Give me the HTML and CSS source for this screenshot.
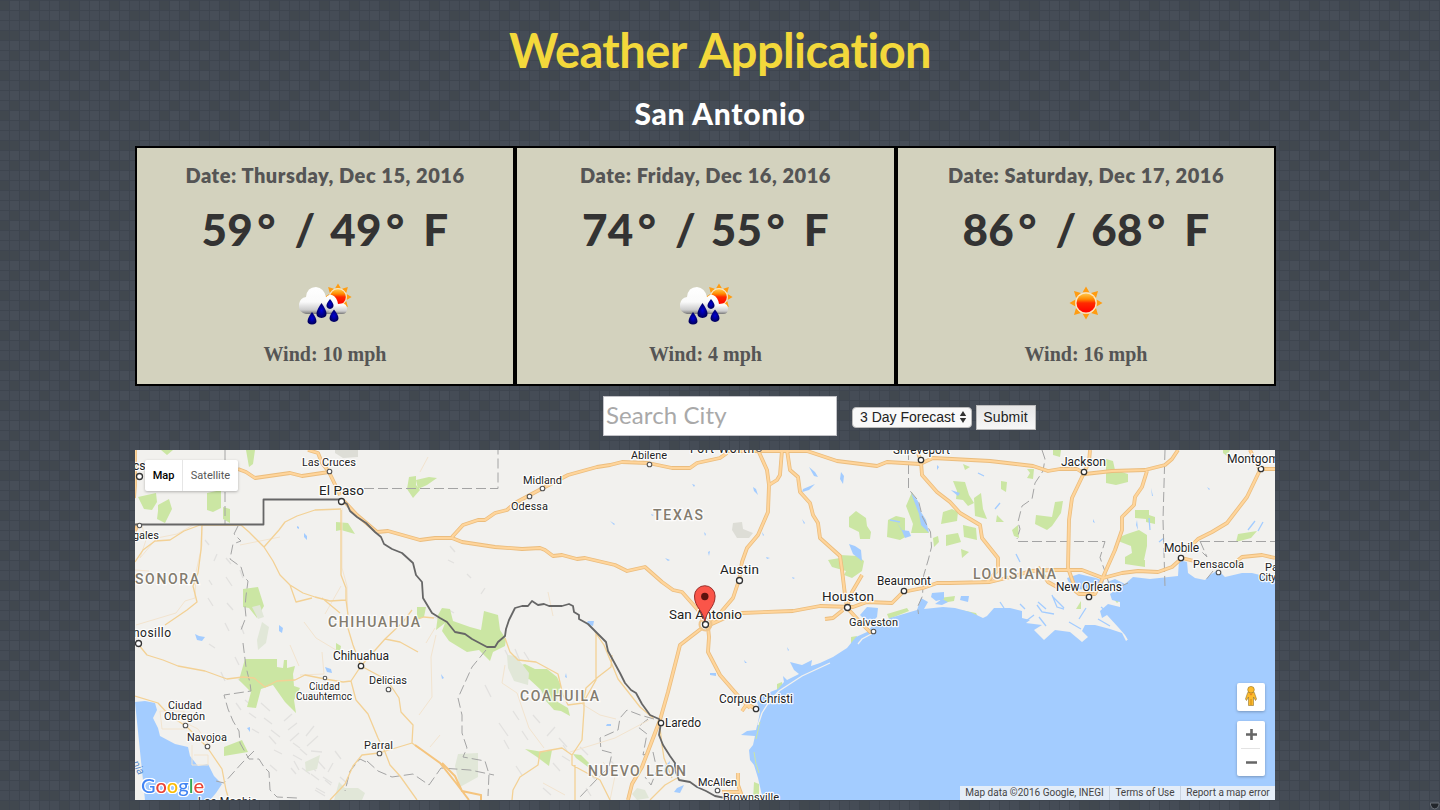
FILE: index.html
```html
<!DOCTYPE html>
<html lang="en">
<head>
<meta charset="utf-8">
<title>Weather Application</title>
<link rel="stylesheet" href="styles.css">
</head>
<body>
<svg class="texture" width="1440" height="810" aria-hidden="true">
  <defs>
    <pattern id="tiles" width="160" height="110" patternUnits="userSpaceOnUse">
      <rect width="160" height="110" fill="#454c56"/>
      <path fill="#41484f" d="M0 0h10v10H0zM30 0h10v10H30zM60 0h20v10H60zM110 0h10v10h-10zM20 10h10v10H20zM70 10h10v10H70zM130 10h20v10h-20zM40 20h20v10H40zM100 20h10v10h-10zM0 30h20v10H0zM60 30h10v10H60zM120 30h20v10h-20zM30 40h20v10H30zM80 40h20v10H80zM150 40h10v10h-10zM10 50h10v10H10zM60 50h10v10H60zM110 50h20v10h-20zM40 60h10v10H40zM90 60h10v10H90zM140 60h10v10h-10zM0 70h10v10H0zM60 70h20v10H60zM120 70h10v10h-10zM20 80h30v10H20zM100 80h10v10h-10zM150 80h10v10h-10zM70 90h20v10H70zM130 90h10v10h-10zM10 100h10v10H10zM50 100h10v10H50zM110 100h20v10h-20z"/>
      <path fill="#474e58" d="M10 0h10v10H10zM90 0h10v10H90zM50 10h10v10H50zM110 10h10v10h-10zM70 20h20v10H70zM140 20h10v10h-10zM30 30h10v10H30zM100 30h10v10h-10zM10 40h10v10H10zM120 40h10v10h-10zM40 50h10v10H40zM90 50h10v10H90zM20 60h10v10H20zM120 60h10v10h-10zM40 70h10v10H40zM100 70h10v10h-10zM70 80h10v10H70zM130 80h10v10h-10zM10 90h10v10H10zM110 90h10v10h-10zM80 100h10v10H80zM140 100h10v10h-10z"/>
    </pattern>
    <pattern id="lines" width="10" height="10" patternUnits="userSpaceOnUse">
      <path d="M0 .5h10M9.500 0v10" stroke="#3e454f" fill="none"/>
    </pattern>
  </defs>
  <rect width="1440" height="810" fill="url(#tiles)"/>
  <rect width="1440" height="810" fill="url(#lines)"/>
  <path d="M1430.500 803h8.500v2q-1 4-4.250 4t-4.250-4z" fill="#22262b" stroke="#6a7078"/>
</svg>

<svg width="0" height="0" class="symbols" aria-hidden="true">
  <defs>
    <linearGradient id="sunfill" x1="0" y1="0" x2="0" y2="1">
      <stop offset="0" stop-color="#ffc84a"/><stop offset=".3" stop-color="#ff8a00"/><stop offset=".5" stop-color="#ff2a00"/><stop offset="1" stop-color="#f00"/>
    </linearGradient>
    <linearGradient id="cloudfill" x1="0" y1="0" x2="0" y2="1">
      <stop offset="0" stop-color="#fff"/><stop offset=".55" stop-color="#fafafa"/><stop offset=".85" stop-color="#ccc"/><stop offset="1" stop-color="#777"/>
    </linearGradient>
    <radialGradient id="dropfill"><stop offset="0" stop-color="#0000d8"/><stop offset="1" stop-color="#00005c"/></radialGradient>
    <symbol id="sun" viewBox="-17 -17 34 34">
      <path fill="#ff9c12" d="M0-16.500l3.500 6h-7zM0 16.500l3.500-6h-7zM-16.500 0l6 3.500v-7zM16.500 0l-6 3.500v-7zM-12-12l7 2-5 5zM12-12l-7 2 5 5zM-12 12l7-2-5-5zM12 12l-7-2 5-5z"/>
      <circle r="10.800" fill="#ffe6bd"/><circle r="9.500" fill="url(#sunfill)"/>
    </symbol>
    <symbol id="rain" viewBox="0 0 56 42">
      <use href="#sun" x="27" y="0" width="28" height="28"/>
      <path fill="url(#cloudfill)" d="M27 31q-3-9 1-15 3-5 7-4 5 2 6 9 9-2 9 5 0 5-5 5z"/>
      <path fill="url(#cloudfill)" d="M9 31q-8-2-7-10 1-6 7-7Q10 4 19 4q8 1 10 10 6 4 4 12-1 5-6 5z"/>
      <g fill="url(#dropfill)"><path d="M24.500 20q10 14 0 15-10-1 0-15z"/><path d="M15 29q9 12 0 12.500-9-.5 0-12.500z"/><path d="M33 16q7 8 0 10-7-2 0-10z"/><path d="M37 26.500q9 11 0 12.500-9-1.500 0-12.500z"/></g>
    </symbol>
    <g id="freeways">
      <path d="M308 450L318 453L322 463L329 472L340 495M135 450V485L134 498M135 531L138 524M238 469L246 472L255 478L290 473L302 476L329 472M343 500L357 515L377 532L388 531L420 540L435 538L452 538L462 542L495 547L522 549L540 548L545 550L553 556L562 555L577 559L585 558L615 565L627 571L645 567L662 582L673 590L682 592L698 610L705 624"/>
      <path d="M452 537L463 525L478 520L485 520L495 513L507 510L515 503L543 488L568 475L597 467L610 465L622 462L648 463L672 468L690 468L697 463L720 458L727 453M727 451H807L837 461L877 466L887 462L920 464L933 458L990 461L1033 466L1048 471L1060 469L1077 469L1085 474L1112 471L1145 470L1165 465L1172 459L1178 450"/>
      <path d="M758 450L767 470L769 485L768 512L758 535L747 548L742 562L739 580L733 598L710 625M782 450L780 475L777 480L769 485M787 450L790 470L798 477L800 492L810 503L813 515L818 523L820 538L840 556L842 570L845 595L847 607M862 575L852 592L847 607"/>
      <path d="M705 627L725 618L742 613L793 611L820 606L853 607L867 602L892 603L903 592L923 588L937 583L950 583L990 582L1018 575L1030 571L1052 570H1082L1103 578L1122 573L1138 571L1158 572L1172 567L1182 558L1198 562M1232 565L1242 557L1262 555L1275 558M1038 567L1048 582L1057 587M1073 583L1074 590L1079 594H1095L1103 578"/>
      <path d="M1090 450L1089 462L1083 475L1072 498L1069 520L1068 568L1074 585M1147 471L1142 487L1135 497L1134 505L1122 517V530L1115 550L1103 577M1250 450L1260 470L1247 497L1227 523L1212 532L1198 539L1185 552M1260 469H1275M917 450L921 462L922 475L937 492L950 502L960 513L980 525L982 538L998 558V570L987 582"/>
      <path d="M708 627L709 637L708 652L720 675L740 698L750 708M742 711L747 704L756 709M702 628L680 645L677 657L668 692L660 720L655 733L642 767L632 784L628 800M849 610L862 624L870 632L875 632M843 610L833 618L825 619M738 773V785L743 799M722 792L741 792"/>
    </g>
  </defs>
</svg>

<main class="page">
  <h1 class="title">Weather Application</h1>
  <h2 class="city">San Antonio</h2>

  <section class="forecast">
    <article class="card">
      <h3 class="date">Date: Thursday, Dec 15, 2016</h3>
      <p class="temp">59<i>°</i> / 49<i>°</i> F</p>
      <svg class="icon" width="56" height="42"><use href="#rain" width="56" height="42"/></svg>
      <p class="wind">Wind: 10 mph</p>
    </article>
    <article class="card">
      <h3 class="date">Date: Friday, Dec 16, 2016</h3>
      <p class="temp">74<i>°</i> / 55<i>°</i> F</p>
      <svg class="icon" width="56" height="42"><use href="#rain" width="56" height="42"/></svg>
      <p class="wind">Wind: 4 mph</p>
    </article>
    <article class="card">
      <h3 class="date">Date: Saturday, Dec 17, 2016</h3>
      <p class="temp">86<i>°</i> / 68<i>°</i> F</p>
      <svg class="icon" width="56" height="42"><use href="#sun" x="11" y="3" width="34" height="34"/></svg>
      <p class="wind">Wind: 16 mph</p>
    </article>
  </section>

  <form class="search">
    <input class="search-input" type="text" placeholder="Search City">
    <div class="select"><span>3 Day Forecast</span><svg width="8" height="14"><path d="M4 1l3.200 5H.8zM4 13l3.200-5H.8z" fill="#333"/></svg></div>
    <button class="submit" type="button">Submit</button>
  </form>

  <section class="map">
    <svg class="map-canvas" width="1140" height="350" viewBox="135 450 1140 350">
      <rect x="135" y="450" width="1140" height="350" fill="#f2f1ee"/>

      <!-- relief -->
      <g class="relief">
        <path d="M205 540l4 5m8 9l-3 7m12-3l5 6m-22 16l3 5m14-8l6 9m8-16l3 8m-35 20l5 8m14-3l6 7m12-20l5 5m-25 28l4 8m12-5l3 8m-35 10l6 4m20 9l4 8m-18 7l4 9m13-2l6 4"/>
        <path d="M236 703l5 7m4-10l8 7m-4 6l7 5m5-15l9 8m-6 7l8 6m-20 5l7 4m12-3l9 7m4-16l8-7m-4 16l9-7m-7 18l9-8m-30 3l7 8m-2 6l8 4m11-11l7 5m6-12l8-10m-7 20l11-10m-25 19l9 5m9-9l11 1m-20 16l8 6m7-14l8 9m10-18l6 8m-18 18l9 6m-16 5l9 5m15-16l8 7m-6 11l8 4m-50-50l7 6m-13 6l5 9m12 4l8 6m-4 10l10 6"/>
        <path d="M505 650l4 8m6-9l5 12m4-9l5 8m-44 25l6 12m22 14l6 9m-20 3l9 13m14-5l6 9m5-25l7 8m15 4l-8 9m12 2l8 9m-5 9l8 5m10-14l8 8m-35 8l7 8m29 3l6 5m-52 9l8 7m35-7l5 8m-75-30l6 9m-18-35l5 9m90 80l9 11m-3-30l8 10m-50-75l4 6m44 10l5 6"/>
        <path d="M450 546l5 6m-7 8l6 3m13 11l4 4m14 10l-4 6m-47 23l7 2m8-9l5 3M270 765l7 6m14-3l5 6m14-8l6 5m17-8l-5 9m-3 8l6 5"/>
      </g>

      <!-- parks -->
      <g fill="#cbe6a3">
        <path d="M161 450l6 5 6-5zM246 450h9l-2 14-4 3zM138 497l18-4 1 9-5 8-8-1zM158 505l11-6 3 10-7 14-8-4 1-8zM207 493l14-3v18l-8 4-6-2zM223 507l7 2v14l-7-4zM336 522l12 1 7 11-14-4-5 1zM409 477l7-1v9l4 5-7 8-6-9zM243 589l15-2 6 19-7 12-8-10-6-1z"/>
        <path d="M245 659h32v8l6 1 1-8h3v8l8-2-2 8 1 12 6 2-6 12 2 13-11-11-12-17-12 4-5 19-9-1 4-15-12-12zM224 747l18-7 6 12-24 4zM336 643l5 3-1 6-4-2zM417 607h9l-2 10-7 2zM442 608l8 1 3 12 17 6 11 3 3-19 14 4 2 15 6 9-1 7-12 6-3 9-11-11-12 2-18-11-7-10 3-8-9 7 2-15z"/>
        <path d="M517 666l8-2 10 5h12l10 8 4 9-5 15 12 7 2 8-9-5-7-1-8-9-5-11-12-11-8 2zM525 749l18 3 9-2-3 16-12-9zM573 754l8 1 8 8-1 4-12-9zM416 480l13-3 8 1-10 7-9 4z"/>
        <path d="M849 517l7-6 10 7 1 8 4 6-1 7-10 0-1-7-10-5zM888 520l8-4 9 2v14l4 3-9 5-13-3zM906 506l6-14 7 16 4 15 6 10-18 0 2-9zM953 481l12 1 4 13 5 8-6 3-5-6-7-1 1-8zM974 498l7-5 2 16 4 10-12-3zM943 512l9-3 6 3-1 9-16 3zM963 525l13 3 1 12-13-3zM946 535l12-2 3 9-15 4zM840 555l18 1 6 5-2 10-10 7-8-3 2-4-14-4-4-7 12-2zM939 598l16-2-1 5-12 2zM887 614l20-6 2 3-20 8zM961 610l15 3 2 4-11-2zM851 637l6-1-3 9-3-1zM777 684l5-2 1 6-6 3zM754 782l5 2v16h-6zM963 464l7 3-5 3zM961 549l8 3-7 6zM933 538l5-2 1 6-5 5z"/>
        <path d="M1106 459l7 2 2 9 13 4v8l-12 3-10-2zM1036 515l16 2 3-15 8-1-2 12-9 13-5 4-12-6zM1127 534l12-4 8 5v11l-3 14h1v7l-20-3v-7l7-4-1-7-13-5 4-5zM1135 510l14 0v5l6 2v7l-9-2v-3l-11-1zM1238 534l19-3-6 7-15 4zM1027 469l7 0-1 10-6-1 3-5zM1001 481l6 1-1 10-5-3zM1053 450h8l-1 7-7-2zM997 515l7 7-8 0zM1012 530l6-5 1 13-5-2zM1001 615l8-1 4 6-7 2zM1112 597l5-3 3 6-3 3zM1076 609l5-8v8zM1223 450h7l-3 6-4-3z"/>
      </g>
      <path fill="#e1e7d8" d="M262 622l7 5-3 16-8 7-1-10zM252 607l8-2 4 12-6 2zM305 762l15-7-3 14-11 3zM458 754l20-1v24l-18 10-5-21zM507 655l9 1 13 17-1 12-14-4-6-13zM637 788l8 2 4 8-12 2-5-6zM339 782l6 6h13l7 5-3 7h-28z"/>
      <path d="M733 523l9-1 1 7 10 4-4 5-12 0-5-8zM335 450h23v7l-15 1-8-5z" fill="#ddddd6"/>

      <!-- water -->
      <g fill="#a3ccff">
        <path d="M763 800L758 778L754 765L750 760L749 750L753 745L755 736L741 735L747 731L756 730L758 722L760 712L757 702L765 694L778 689L784 682L783 676L787 680L799 674L794 670L790 662L802 665L812 660L811 666L820 663L833 657L847 648L856 637L867 632L873 625L865 620L860 615L867 607L878 608L877 617L873 621L877 626L890 618L917 610L921 598L928 602L924 609L943 607L955 608L970 612L983 618L987 616L994 608L1010 608L1022 611V618L1030 620L1026 623L1042 625L1034 630L1044 640L1055 630L1070 632L1082 642L1088 637L1082 631L1085 625L1095 625L1110 629L1122 633L1126 641L1132 636L1131 645L1125 635L1118 627L1107 615L1102 618L1100 611L1108 604L1120 607L1120 602L1112 600L1110 594L1117 589L1107 582L1115 579L1125 584L1133 577L1150 579L1178 576L1179 560L1187 562L1188 573L1195 578L1205 580L1210 575L1218 570L1225 577L1242 573L1252 573L1260 575L1275 578V800z"/>
        <path d="M135 702l10-1 10 2 2 7-4 8 5 10 2 8 15 8 13 3 2 9 8 10 10-2 6 12 8 8-6 9-6 7h-65zM1067 578l12-4 17 4 8 3-3 8-11 1-14-1-8-8zM896 521l6 9 7 1 2 5-6 2-3-7zM911 493l7 8 3 11 5 8 3 13-8-8-2-11zM849 544l6 2 6 4 1 11-9-7zM932 593l12-1v7l-8 2-5-4zM961 596h8l-1 6-8-2zM942 599l6 3-6 3-7-1zM665 766l5-5-2 13-4-2zM677 788l7-3-4 8-6-1zM588 621h6l-1 5-7-2zM325 667l6 2 1 4-5-1zM304 533l3 3v4l-3-3zM297 526l2 1v2l-2-1zM841 472l3 4-1 8-3-5zM753 487l3 2 2 6-4-4zM809 467l6 5 3 5-4-1zM803 489l12-5-6 6-7 2zM802 519l3 4-1 1zM710 673h6v3l-6-1zM195 634l4 2 6 1-3 4-5-1zM279 625l4 3-1 5-3-2zM441 674l3 4-2 1zM607 724h4v2h-5zM247 728l3-1v5z"/>
        <path d="M692 484l3 1-1 2zM651 514l3 1-2 1zM610 521l5 3-1 1zM665 558l5 2-2 1zM566 673l1 5-2-1zM937 465l2 2-2 3zM951 490l9 3-2 3-6-5zM762 532l2 3-1 1zM766 557l4 1-3 1zM792 577l3 1-2 1zM787 647l2 3-1 1zM744 660l3 3h-2zM704 532l2 2-1 2zM708 552l2-1-1 5zM1151 488l2 8h-1zM1137 520l1 10-2-5zM1093 519l2 4-2-1zM1207 487l3 2-1 1z"/>
      </g>
      <path fill="none" stroke="#f2f1ee" stroke-width="1.300" d="M875 632L862 639L858 644M830 663L802 676L779 691L769 702L762 713L758 725"/>
      <path d="M760 722l-4 17m-2 13l2 12 3 9" stroke="#cbe6a3" fill="none"/>
      <g fill="none" stroke="#a3ccff" stroke-width="1.300">
        <path d="M1052 595l5 12 7 2m-27-4l5 7 12 2m-20 1l-8 6m43 1l12 7m-2-10l7-11m12 11l12 7m-57-29l11 11m-25 9l7 9m55-19l9 7m-64-5l-8-7M1000 602l4 6m16-4l5 5m-9-55l4 8m228-32l7-9m3 10l5-9m-114-4l1 12m14 8l-5 4M995 509l5-6m-22-30l6 3m-84 46l-10-2"/>
      </g>

      <!-- state boundaries -->
      <g class="state">
        <path d="M225 450v74M364 488.500h134V450M908.500 450v39l10 12 4 16 8 15 1 15-3 12-5 17-1 20-5 11 1 7M1165 450l-2 70 2 67M1018 541.500h87l-5 16 5 14 4 12M1200 541.500h75M1200 541l7 16-5-5M1042 450l3 9-2 12-8 12-3 16-10 7-4 16 2 7-3 10"/>
        <path d="M238 526l-4 8 7 7-8 3-3 15 11 8 3 10 4 4-2 15-1 11 1 10-5 13m2 13l3 24 4 16 1 8-27 4 4 14 5 12 6 10 1 12 9 16h10l5 8 5 5 1 18 7 7 20 1M254 751l-12 12-18 20-8-2M486 650l-14 17-14 31 4 17v18l5 15-4 9 22 4 4 13-1 22M366 762l-6-3-10 12-5 20M367 761l11 10 14 6 21-3 16 11 12-17 29 2 24 5M654 719l-14-4-13-5-7 8-2 12-18 8 1 12 11 3-3 14-12 12-17 18M648 719l-10 8 9 7-4 21 10-3 4 18-6 15-6-8M1128 583l-9 4M1213 571l-8 10"/>
      </g>

      <!-- minor roads -->
      <g class="minor">
        <path d="M202 525v20l-6 27-1 26-10 3-9 12-40 12M142 526l4 14-6 18 17-20 20-4 18-10M342 508v60l5 18 1 36M341 586l-16 28M188 724l10 5 12 18M160 711h24v18h-22zM192 745v20h16v-10h-14M322 652l2 22-24 1M290 645l9 21M304 622l12 16 20 12M419 715l13-18-1-40 5-22M505 665l-3 18 15 10 12 35 15 20M582 704l18 11 16 4M570 752l45-14 34-18M548 592l5 24M135 570l14 1M240 545l40-8M440 735l-10 12M610 800l5-24-12-14M420 472l8-15M565 795l-22-12M435 628l-9 15"/>
      </g>
      <g class="road">
        <path d="M135 562L143 550L155 541L170 540L184 531L200 525H241L249 532L264 547L273 561L280 575L290 585L303 593L315 597L330 601L346 600L346 588L341 575V510M264 547L279 530L285 522L297 516L315 510L341 509M290 585L296 602L312 598M202 525L201 550L198 573L193 586L197 602L187 610L165 625M322 598L340 613M346 600L348 615"/>
        <path d="M138 644L147 655L163 660L178 666L205 671L227 679L243 677L254 678L265 687L277 681L295 680L305 675L325 679L343 682L351 681L361 666L353 645L347 625M351 681L356 700L368 714L378 738L385 752L390 765L400 776L417 800M361 666L387 680L399 698L401 712L413 725L412 743L379 753L362 755L353 766L345 784L330 800M135 696L158 703L170 716L186 726L207 747L222 769L226 790L229 800M361 666L385 639L403 622L412 610M385 639L400 642L418 652M412 743L420 749"/>
        <path d="M505 638L510 652L518 660L536 662L558 674L563 695L568 705L583 703L586 688L598 677L611 667L612 655M584 702L584 710L582 740L572 755V765L600 780L610 800M572 755L562 748L540 752L538 765L520 777L513 790L512 800M575 765V800M596 632V680L583 703M595 632L604 645L618 679L640 707L653 718M660 728L662 745L664 758L672 778M679 777L665 785L650 800M415 620L424 617L434 618"/>
      </g>
      <use href="#freeways" class="freeway-edge"/>
      <use href="#freeways" class="freeway-fill"/>
      <path d="M415 745L440 763L456 783L469 800M442 763L455 776L462 791L481 795V800" class="mexico-road"/>
      <circle cx="705.500" cy="624.500" r="6" fill="none" stroke="#efc58c" stroke-width="2"/>

      <!-- national border -->
      <path class="border" d="M135 524.500H263.500V499.500H340L347 504L350 511L357 517L366 523L375 532L381 537L384 544L392 549L402 553L413 563L416 575L422 582L423 598L432 613L440 618L447 622L455 632L465 634L472 639L487 647L495 647L498 642L505 636L506 629L509 620L515 608L522 606L528 606L532 601L538 605L544 604L549 606L562 606L569 604L573 606L574 612L579 615V619L588 624L597 633L606 642L608 651L614 662L620 673L625 683L631 690L636 693L642 704L650 715L659 719L661 723L659 735L663 745L670 756L675 763V770L679 780L690 782L697 787L706 791L715 796L735 800"/>

      <!-- city markers -->
      <g class="dot-big"><circle cx="139.500" cy="476.500" r="3"/><circle cx="341.500" cy="501.500" r="3"/><circle cx="138.500" cy="643.500" r="3"/><circle cx="361" cy="666" r="2.700"/><circle cx="739.500" cy="580.500" r="3"/><circle cx="847.500" cy="607.500" r="3"/><circle cx="1084" cy="472" r="2.700"/><circle cx="1181" cy="558" r="2.700"/><circle cx="1089" cy="597" r="2.700"/><circle cx="1261" cy="469" r="2.700"/><circle cx="756" cy="709" r="2.700"/><circle cx="661" cy="723" r="2.700"/><circle cx="904" cy="591" r="2.700"/><circle cx="921" cy="460" r="2.700"/></g>
      <g class="dot-small"><circle cx="139.500" cy="525.500" r="2.200"/><circle cx="329.500" cy="471.500" r="2.300"/><circle cx="542.500" cy="488.500" r="2.300"/><circle cx="529.500" cy="496.500" r="2.300"/><circle cx="649.500" cy="464.500" r="2.300"/><circle cx="325" cy="678" r="1.800"/><circle cx="388.500" cy="689.500" r="2.300"/><circle cx="185.500" cy="725.500" r="2.300"/><circle cx="207.500" cy="746.500" r="2.300"/><circle cx="379.500" cy="753.500" r="2.300"/><circle cx="873.500" cy="631.500" r="2.300"/><circle cx="1218.500" cy="572.500" r="2.300"/><circle cx="717.500" cy="790.500" r="2.300"/><circle cx="759" cy="449" r="2.500"/></g>

      <g class="region">
        <text x="135" y="584" textLength="64">SONORA</text>
        <text x="328" y="627" textLength="92">CHIHUAHUA</text>
        <text x="653" y="520" textLength="50">TEXAS</text>
        <text x="520" y="701" textLength="79">COAHUILA</text>
        <text x="588" y="776" textLength="98">NUEVO LEON</text>
        <text x="973" y="579" textLength="83">LOUISIANA</text>
      </g>
      <g class="place">
        <text x="319" y="495" textLength="45" class="large">El Paso</text>
        <text x="669" y="619" textLength="73" class="large">San Antonio</text>
        <text x="720" y="574" textLength="39" class="large">Austin</text>
        <text x="822" y="601" textLength="52" class="large">Houston</text>
        <text x="133" y="637" textLength="38" class="medium">nosillo</text>
        <text x="333" y="660" textLength="56" class="medium">Chihuahua</text>
        <text x="1061" y="466" textLength="45" class="medium">Jackson</text>
        <text x="1227" y="463" class="medium">Montgomery</text>
        <text x="1164" y="552" textLength="35" class="medium">Mobile</text>
        <text x="1056" y="591" textLength="66" class="medium">New Orleans</text>
        <text x="719" y="703" textLength="74" class="medium">Corpus Christi</text>
        <text x="877" y="585" textLength="54" class="medium">Beaumont</text>
        <text x="665" y="727" textLength="36" class="medium">Laredo</text>
        <text x="690" y="453" textLength="64" class="medium">Fort Worth</text>
        <text x="893" y="454" textLength="57" class="medium">Shreveport</text>
        <text x="133" y="470" class="medium">cs</text>
        <text x="302" y="466" textLength="54">Las Cruces</text>
        <text x="523" y="484" textLength="39">Midland</text>
        <text x="511" y="510" textLength="37">Odessa</text>
        <text x="631" y="459" textLength="36">Abilene</text>
        <text x="133" y="539" textLength="26">gales</text>
        <text x="168" y="709" textLength="34">Ciudad</text>
        <text x="164" y="720" textLength="41">Obregón</text>
        <text x="187" y="741" textLength="40">Navojoa</text>
        <text x="309" y="690" textLength="31" class="small">Ciudad</text>
        <text x="296" y="700" textLength="56" class="small">Cuauhtemoc</text>
        <text x="369" y="684" textLength="38">Delicias</text>
        <text x="364" y="749" textLength="29">Parral</text>
        <text x="849" y="626" textLength="49">Galveston</text>
        <text x="1193" y="568" textLength="51">Pensacola</text>
        <text x="1265" y="571">Panama</text>
        <text x="1259" y="581" class="small">City</text>
        <text x="698" y="786" textLength="39">McAllen</text>
        <text x="723" y="801" textLength="56">Brownsville</text>
        <text x="198" y="805" textLength="59">Los Mochis</text>
      </g>
      <text transform="translate(132 763) rotate(62)" class="sea-label">nia</text>

      <!-- marker pin -->
      <path d="M704.800 623c-1-13-10.300-15-10.300-27a10.300 10.300 0 0 1 20.600 0c0 12-9.300 14-10.300 27z" fill="#fa5549" stroke="#9a2e29"/>
      <circle cx="704.800" cy="596.500" r="3.700" fill="#5c120e"/>
      <circle cx="705.500" cy="624.500" r="3" fill="#fff" stroke="#333" stroke-width="1.300"/>

      <text x="141" y="793" textLength="63" class="google"><tspan fill="#4285f4">G</tspan><tspan fill="#ea4335">o</tspan><tspan fill="#fbbc05">o</tspan><tspan fill="#4285f4">g</tspan><tspan fill="#34a853">l</tspan><tspan fill="#ea4335">e</tspan></text>
    </svg>

    <div class="map-type"><b>Map</b><span>Satellite</span></div>
    <div class="controls">
      <div class="pegman">
        <svg width="28" height="28"><path d="M10.700 9.500L8.500 16l1 1.500 2-3.500v8.500h5V14l2 3.500 1-1.500-2.200-6.500z" fill="#fdbb2d" stroke="#8f7433" stroke-width=".6"/><path d="M14 16v6" stroke="#d18b13"/><circle cx="14" cy="6.700" r="3.300" fill="#fdbb2d" stroke="#93731f" stroke-width=".6"/><path d="M12 10.500l2 2 2-2z" fill="#e8821e"/></svg>
      </div>
      <div class="zoom">
        <svg width="28" height="55"><path d="M9 13.500h11M14.500 8v11M9 41.500h11" stroke="#666" stroke-width="2.600"/><path d="M4 27.500h19" stroke="#e3e3e3"/></svg>
      </div>
    </div>
    <div class="attribution"><span class="data">Map data ©2016 Google, INEGI</span><span class="terms">Terms of Use</span><span class="report">Report a map error</span></div>
  </section>
</main>
</body>
</html>
```
FILE: styles.css
```css
* { box-sizing: border-box; }
body { margin: 0; height: 810px; overflow: hidden; background: #454c56; font-family: Lato, sans-serif; }
.texture { position: absolute; inset: 0; z-index: -1; }
.symbols { position: absolute; }
.page { width: 1141px; margin-left: 135px; }
h1, h2, h3, p { margin: 0; }

.title { width: 1170px; padding-top: 21px; height: 96px; color: #f3d83b; font-size: 47px; line-height: 58px; font-weight: 700; letter-spacing: -.6px; word-spacing: 4px; text-align: center; white-space: nowrap; }
.city { width: 1170px; height: 50px; color: #fff; font-size: 30px; line-height: 34px; font-weight: 900; letter-spacing: .7px; text-align: center; }

.forecast { display: grid; grid-template-columns: 380px 381px 380px; height: 240px; }
.card { display: flex; flex-direction: column; align-items: center; border: 2px solid #000; background: #d3d2be; padding-top: 13px; white-space: nowrap; }
.date { height: 28px; color: #555; font-size: 20px; line-height: 28px; font-weight: 800; letter-spacing: .53px; }
.temp { height: 76px; padding-top: 10px; color: #333; font-size: 44px; line-height: 60px; font-weight: 900; letter-spacing: .3px; word-spacing: 4px; }
.temp i { margin: 0 4px 0 4px; font-style: normal; }
.icon { display: block; margin-top: 18px; }
.wind { margin-top: 16px; color: #555; font: bold 20px/26px "Liberation Serif", serif; }

.search { display: flex; height: 64px; padding: 10px 0 0 468px; }
.search-input { width: 234px; height: 40px; padding: 0 2px 4px; border: 1px solid #c3c3c8; outline: 0; background: #fff; font: 24px Lato, sans-serif; letter-spacing: .1px; }
.search-input::placeholder { color: #a9a9a9; opacity: 1; }
.select { display: flex; align-items: center; justify-content: space-between; width: 120px; height: 21px; margin: 11px 4px 0 15px; padding: 0 4px 1px 7px; border: 1px solid #bbb; border-radius: 4px; background: #f9f9f9; color: #222; font: 14px "Liberation Sans", sans-serif; white-space: nowrap; }
.submit { width: 60px; height: 25px; margin-top: 9px; padding: 0 1px 2px 0; border: 1px solid #bbb; background: linear-gradient(#e6e6e6, #f7f7f7); color: #222; font: 14px "Liberation Sans", sans-serif; letter-spacing: .15px; }

.map { position: relative; width: 1140px; height: 350px; overflow: hidden; }
.map-canvas { display: block; }
.relief { fill: none; stroke: #e2e1df; stroke-width: 1.300; }
.state { fill: none; stroke: #a4a4a4; stroke-width: 1; stroke-dasharray: 10 4; }
.minor { fill: none; stroke: #f2e4cf; stroke-width: 1; }
.road { fill: none; stroke: #f3d195; stroke-width: 1.300; stroke-linejoin: round; }
.freeway-edge { fill: none; stroke: #ebbd7e; stroke-width: 3.800; stroke-linejoin: round; }
.freeway-fill { fill: none; stroke: #ffd59b; stroke-width: 2.200; stroke-linejoin: round; }
.mexico-road { fill: none; stroke: #f5c47d; stroke-width: 2; }
.border { fill: none; stroke: #666; stroke-width: 1.800; stroke-linejoin: round; }
.dot-big { fill: #fff; stroke: #333; stroke-width: 1.300; }
.dot-small { fill: #fff; stroke: #555; stroke-width: 1.100; }
.region { font: 500 14px Roboto, sans-serif; fill: #837c6e; stroke: #fff; stroke-width: 2.500px; stroke-opacity: .8; paint-order: stroke; }
.place { font: 11px Roboto, sans-serif; fill: #222; stroke: #fff; stroke-width: 2.500px; stroke-opacity: .9; stroke-linejoin: round; paint-order: stroke; }
.large { font-size: 13.500px; }
.medium { font-size: 12px; }
.small { font-size: 10px; }
.sea-label { font: italic 11px Roboto, sans-serif; fill: #5b8fd0; }
.google { font: 500 20px Lato, sans-serif; filter: drop-shadow(1px 0 #fff) drop-shadow(-1px 0 #fff) drop-shadow(0 1px #fff) drop-shadow(0 -1px #fff); }

.map-type { position: absolute; left: 10px; top: 10px; display: flex; width: 93px; height: 31px; border-radius: 2px; background: #fff; box-shadow: 0 1px 3px #0004; font: 11px/31px Roboto, sans-serif; text-align: center; }
.map-type b { width: 38px; border-right: 1px solid #e6e6e6; font-weight: 500; color: #000; }
.map-type span { flex: 1; color: #565656; }
.controls { position: absolute; right: 10px; top: 233px; display: flex; flex-direction: column; gap: 10px; }
.pegman, .zoom { width: 28px; height: 28px; border-radius: 2px; background: #fff; box-shadow: 0 1px 3px #0004; }
.zoom { height: 55px; }
.attribution { position: absolute; right: 0; bottom: 0; display: flex; height: 14px; background: #e4edf8; color: #444; font: 10px/14px Roboto, sans-serif; white-space: nowrap; text-align: center; }
.data { width: 149px; }
.terms { width: 71px; border-left: 1px solid #c9d3df; }
.report { width: 95px; border-left: 1px solid #c9d3df; }
```
